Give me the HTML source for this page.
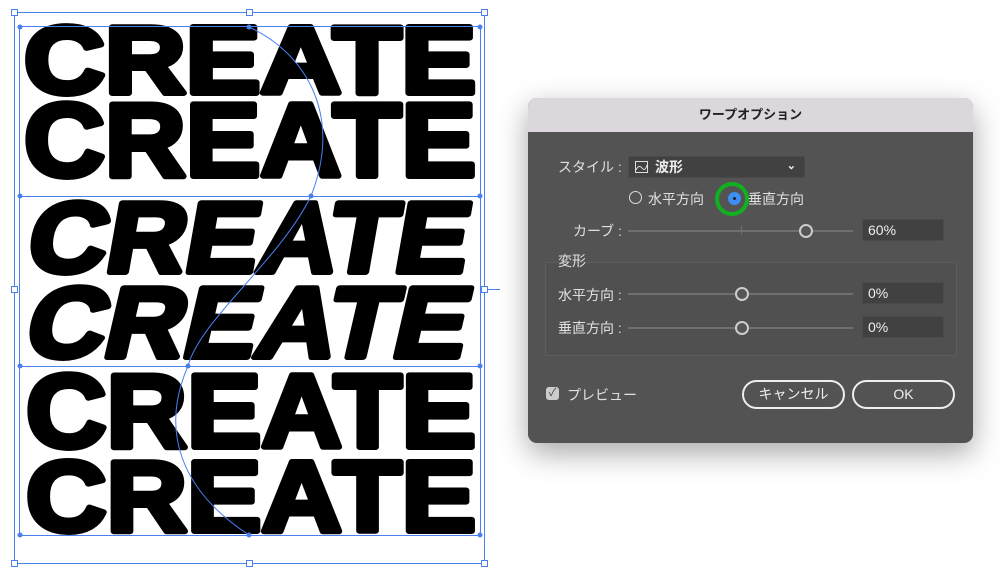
<!DOCTYPE html>
<html><head><meta charset="utf-8"><style>
body{margin:0;width:1000px;height:586px;background:#fff;position:relative;overflow:hidden;font-family:"Liberation Sans","Noto Sans CJK JP",sans-serif}
.a{position:absolute}
.dlg{left:528px;top:98px;width:445px;height:345px;background:#535353;border-radius:9px;overflow:hidden;box-shadow:0 10px 30px rgba(0,0,0,.35)}
.tb{left:0;top:0;width:445px;height:34px;background:#dcd7dc;text-align:center;line-height:34px;font-size:13px;font-weight:bold;color:#222}
.t{color:#e0e0e0;font-size:14px;white-space:nowrap}
.inp{background:#414141;border:1px solid #4a4a4a;border-radius:2px;color:#eee;font-size:14px;line-height:21px;padding-left:5px;box-sizing:border-box}
.trk{height:2px;background:#6f6f6f}
.knob{width:10px;height:10px;border:2px solid #ccc;border-radius:50%;background:#555}
.btn{border:2px solid #eee;border-radius:15px;color:#eee;font-size:14px;text-align:center;box-sizing:border-box;line-height:25px}
</style></head><body>
<svg class="a" style="left:0;top:0" width="500" height="586">
<g font-family="Liberation Sans" font-weight="bold" fill="#000" stroke="#000" stroke-width="6" stroke-linejoin="round">
<text x="24" y="93" font-size="96" textLength="452" lengthAdjust="spacingAndGlyphs">CREATE</text>
<text x="24" y="176" font-size="104" textLength="452" lengthAdjust="spacingAndGlyphs">CREATE</text>
<text x="24" y="272" font-size="100" textLength="440" lengthAdjust="spacingAndGlyphs" transform="translate(48,0) skewX(-10)">CREATE</text>
<text x="24" y="357" font-size="100" textLength="440" lengthAdjust="spacingAndGlyphs" transform="translate(80,0) skewX(-13)">CREATE</text>
<text x="26" y="447" font-size="104" textLength="450" lengthAdjust="spacingAndGlyphs">CREATE</text>
<text x="26" y="531" font-size="100" textLength="450" lengthAdjust="spacingAndGlyphs">CREATE</text>
</g>
<g stroke="#4a7ff0" fill="none" stroke-width="1">
<rect x="14.5" y="12.5" width="470" height="551"/>
<rect x="19.5" y="26.5" width="461" height="509"/>
<line x1="19" y1="196.5" x2="480" y2="196.5"/><line x1="19" y1="366.5" x2="480" y2="366.5"/>
<path d="M249 27 C300 50 345 110 311 196 C280 260 200 320 188 366 C160 430 180 490 249 535"/>
<line x1="485" y1="289.5" x2="500" y2="289.5"/><circle cx="506" cy="289.5" r="4"/>
</g>
<g fill="#fff" stroke="#4a7ff0">
<rect x="11.5" y="9.5" width="6" height="6"/><rect x="246.5" y="9.5" width="6" height="6"/><rect x="481.5" y="9.5" width="6" height="6"/>
<rect x="11.5" y="286.5" width="6" height="6"/><rect x="481.5" y="286.5" width="6" height="6"/>
<rect x="11.5" y="560.5" width="6" height="6"/><rect x="246.5" y="560.5" width="6" height="6"/><rect x="481.5" y="560.5" width="6" height="6"/>
</g>
<g fill="#4a7ff0">
<circle cx="20" cy="27" r="2.5"/><circle cx="249" cy="27" r="2.5"/><circle cx="480" cy="27" r="2.5"/>
<circle cx="20" cy="196" r="2.5"/><circle cx="311" cy="196" r="2.5"/><circle cx="480" cy="196" r="2.5"/>
<circle cx="20" cy="366" r="2.5"/><circle cx="188" cy="366" r="2.5"/><circle cx="480" cy="366" r="2.5"/>
<circle cx="20" cy="535" r="2.5"/><circle cx="249" cy="535" r="2.5"/><circle cx="480" cy="535" r="2.5"/>
</g>
</svg>
<div class="a dlg">
<div class="a tb">ワープオプション</div>
<div class="a t" style="left:30px;top:59px">スタイル :</div>
<div class="a inp" style="left:100px;top:58px;width:177px;height:22px;font-weight:bold;padding-left:26px">波形<span style="position:absolute;right:8px;top:-1px;font-size:11px">⌄</span></div>
<svg class="a" style="left:107px;top:63px" width="13" height="12"><rect x=".5" y=".5" width="12" height="11" fill="none" stroke="#ddd"/><path d="M1 9 Q4 3 7 7 T12 4" stroke="#ddd" fill="none"/></svg>
<div class="a" style="left:101px;top:93px;width:11px;height:11px;border:1.5px solid #ddd;border-radius:50%"></div>
<div class="a t" style="left:120px;top:91px">水平方向</div>
<div class="a" style="left:187px;top:84px;width:26px;height:26px;border:4px solid #10b020;border-radius:50%"></div>
<div class="a" style="left:200px;top:94px;width:13px;height:13px;background:#3d8ef5;border-radius:50%"></div>
<div class="a" style="left:205px;top:99px;width:3px;height:3px;background:#222;border-radius:50%"></div>
<div class="a t" style="left:220px;top:91px">垂直方向</div>
<div class="a t" style="left:45px;top:123px">カーブ :</div>
<div class="a trk" style="left:100px;top:132px;width:225px"></div>
<div class="a" style="left:213px;top:128px;width:1px;height:9px;background:#6f6f6f"></div>
<div class="a knob" style="left:271px;top:126px"></div>
<div class="a inp" style="left:334px;top:121px;width:82px;height:22px">60%</div>
<div class="a" style="left:17px;top:164px;width:410px;height:92px;border:1px solid #5d5d5d;border-radius:3px;background:#505050"></div>
<div class="a t" style="left:30px;top:153px">変形</div>
<div class="a t" style="left:30px;top:187px">水平方向 :</div>
<div class="a trk" style="left:100px;top:195px;width:225px"></div>
<div class="a knob" style="left:207px;top:189px"></div>
<div class="a inp" style="left:334px;top:184px;width:82px;height:22px">0%</div>
<div class="a t" style="left:30px;top:220px">垂直方向 :</div>
<div class="a trk" style="left:100px;top:229px;width:225px"></div>
<div class="a knob" style="left:207px;top:223px"></div>
<div class="a inp" style="left:334px;top:218px;width:82px;height:22px">0%</div>
<div class="a" style="left:18px;top:289px;width:13px;height:13px;background:#ccc;border-radius:3px;color:#444;font-size:11px;line-height:13px;text-align:center">✓</div>
<div class="a t" style="left:39px;top:287px">プレビュー</div>
<div class="a btn" style="left:214px;top:282px;width:103px;height:29px">キャンセル</div>
<div class="a btn" style="left:324px;top:282px;width:103px;height:29px">OK</div>
</div>
</body></html>
